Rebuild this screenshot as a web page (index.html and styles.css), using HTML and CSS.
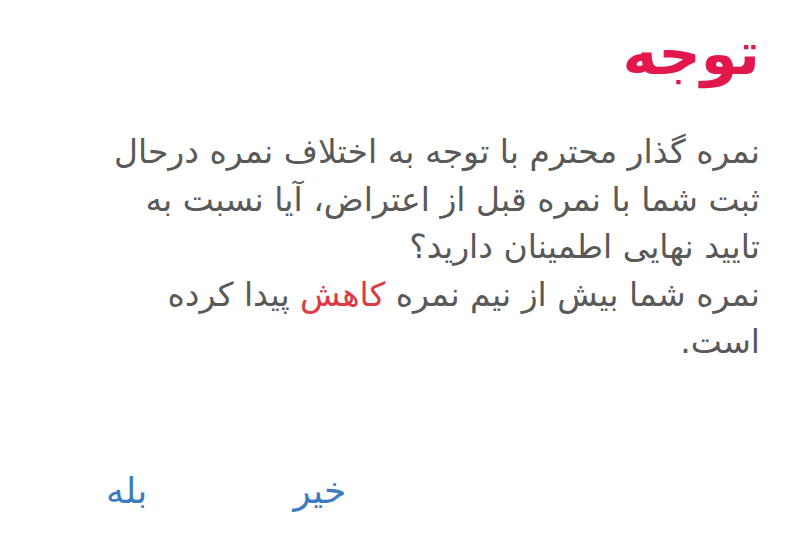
FILE: index.html
```html
<!DOCTYPE html>
<html lang="fa" dir="rtl">
<head>
  <meta charset="utf-8" />
  <meta name="viewport" content="width=device-width, initial-scale=1.0" />
  <title>توجه</title>
  <link rel="stylesheet" href="styles.css">
</head>
<body>

  <div class="dialog">
    <h1 class="dialog-title">توجه</h1>
    <p class="dialog-msg">
      نمره گذار محترم با توجه به اختلاف نمره درحال ثبت شما با نمره قبل از اعتراض، آیا نسبت به تایید نهایی اطمینان دارید؟<br>
      نمره شما بیش از نیم نمره <span class="warn">کاهش</span> پیدا کرده است.
    </p>

    <div class="dialog-actions">
      <button class="action" onclick="closeDialog(false)">خیر</button>
      <button class="action" onclick="closeDialog(true)">بله</button>
    </div>
  </div>

  <script>
    function closeDialog(ok) {
      document.querySelector(".dialog").classList.toggle("done", ok);
    }
  </script>
</body>
</html>
```

FILE: styles.css
```css
body {
  margin: 0;
  background: #fff;
  font-family: "DejaVu Sans", sans-serif;
}

.dialog {
  padding: 12px 40px 0 40px;
  height: 549px;
  box-sizing: border-box;
}

.dialog-title {
  margin: 0;
  font-size: 59px;
  font-weight: bold;
  color: #e2174b;
  line-height: 84px;
}

.dialog-msg {
  margin: 32px 0 0 0;
  padding-left: 55px;
  font-size: 33px;
  line-height: 47.5px;
  color: #595959;
}

.warn {
  color: #dd3b46;
}

.dialog-actions {
  display: flex;
  justify-content: flex-end;
  gap: 146px;
  margin-top: 104px;
  padding-left: 66px;
}

.action {
  border: none;
  background: none;
  padding: 0;
  font-family: inherit;
  font-size: 36px;
  color: #3b7cc0;
  cursor: pointer;
}
```
